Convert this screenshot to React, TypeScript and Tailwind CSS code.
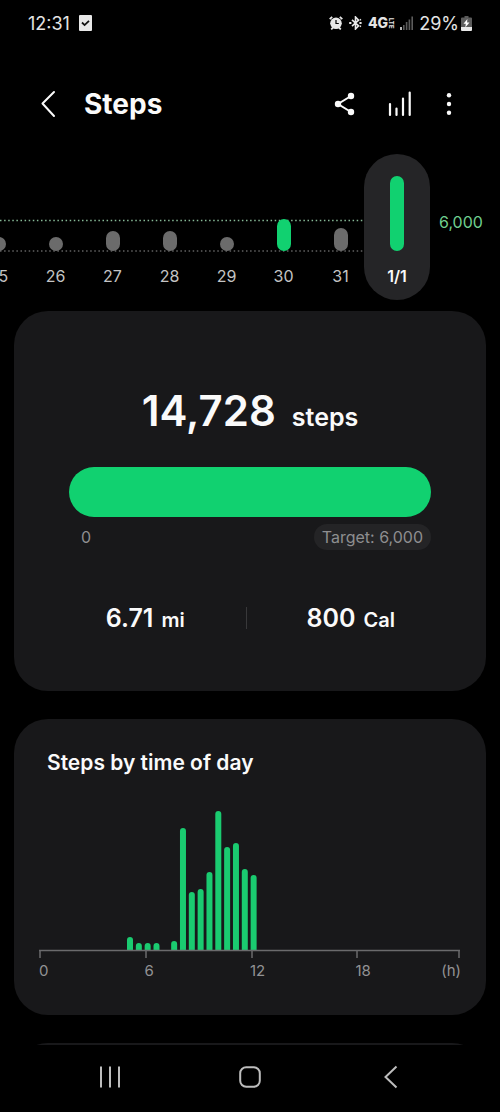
import clsx from "clsx";

const days = [
  { label: "25", height: 14 },
  { label: "26", height: 14 },
  { label: "27", height: 20 },
  { label: "28", height: 20 },
  { label: "29", height: 14 },
  { label: "30", height: 32, reached: true },
  { label: "31", height: 23 },
  { label: "1/1", height: 75, reached: true, selected: true },
];

// one slot per half hour, value is the bar height
const slots = [
  { slot: 10, value: 13 },
  { slot: 11, value: 7 },
  { slot: 12, value: 7 },
  { slot: 13, value: 7 },
  { slot: 15, value: 9 },
  { slot: 16, value: 122 },
  { slot: 17, value: 58 },
  { slot: 18, value: 61 },
  { slot: 19, value: 78 },
  { slot: 20, value: 139 },
  { slot: 21, value: 103 },
  { slot: 22, value: 107 },
  { slot: 23, value: 81 },
  { slot: 24, value: 75 },
];

const ticks = [1, 107, 213, 318, 420];

function StatusBar() {
  return (
    <div className="flex h-[46px] items-center justify-between px-7 text-[18px] text-[#e4e4e4]">
      <div className="flex items-center gap-[9px]">
        <span>12:31</span>
        <svg viewBox="0 0 13 16" className="h-4 w-[13px]">
          <rect width="13" height="16" rx="1" fill="#e8e8e8" />
          <path d="M3 7.5l2.6 2.6L10 5.8" fill="none" stroke="#111" strokeWidth="1.8" />
        </svg>
      </div>
      <div className="flex items-center gap-[6px]">
        <svg viewBox="0 0 14 14" className="size-[14px]">
          <circle cx="7" cy="7.3" r="5.8" fill="#e8e8e8" />
          <path d="M7 4v3.5h2.8" fill="none" stroke="#000" strokeWidth="1.2" />
          <path d="M.7 3.2L3.2.9M13.3 3.2L10.8.9M2.2 13.4l1.6-1.6M11.8 13.4l-1.6-1.6" stroke="#e8e8e8" strokeWidth="1.8" />
        </svg>
        <svg viewBox="0 0 13 14" className="h-[14px] w-[13px]" fill="none" stroke="#e8e8e8" strokeWidth="1.6">
          <path d="M3 3.8l6.6 6L6.5 13V1l3.1 3.2L3 10.2" />
          <path d="M.2 7h2.2M10.4 7h2.2" strokeWidth="2.2" />
          <path d="M11 3l.9 1.4M11 11l.9-1.4" strokeWidth="1.2" />
        </svg>
        <div className="flex items-center text-[14px] leading-4 font-extrabold">
          4G
          <span className="text-[6px] leading-[6px] [writing-mode:vertical-rl]">LTE</span>
        </div>
        <svg viewBox="0 0 13 14" className="h-[14px] w-[13px]">
          <path d="M1 14v-3" stroke="#e8e8e8" strokeWidth="1.6" />
          <path d="M3.8 14V9M6.6 14V6M9.4 14V3.5M12.2 14V.5" stroke="#5c5c5c" strokeWidth="1.6" />
        </svg>
        <div className="flex items-center gap-[2px]">
          <span>29%</span>
          <svg viewBox="0 0 11 15" className="h-[15px] w-[11px]">
            <path d="M3.5 0h4v1.5H10a1 1 0 011 1V11H0V2.500a1 1 0 011-1h2.500z" fill="#5c5c5c" />
            <path d="M0 11h11v3a1 1 0 01-1 1H1a1 1 0 01-1-1z" fill="#e8e8e8" />
            <path d="M6.400 3L2.500 7.800h2.300L4.300 11.500l4.200-4.900H6.100z" fill="#fff" />
          </svg>
        </div>
      </div>
    </div>
  );
}

function Header() {
  return (
    <header className="flex h-[108px] items-center pt-2 pr-[45px] pl-8">
      <button aria-label="Back" className="flex size-8 items-center justify-center">
        <svg viewBox="0 0 16 28" className="h-7 w-4" fill="none" stroke="#fafafa" strokeWidth="2" strokeLinecap="round" strokeLinejoin="round">
          <path d="M14 2L2.500 13.500 14 26" />
        </svg>
      </button>
      <h1 className="ml-5 flex-1 text-[28px] leading-8 font-bold text-[#fafafa]">Steps</h1>
      <div className="flex items-center gap-7">
        <button aria-label="Share">
          <svg viewBox="0 0 24 24" className="size-6">
            <path d="M18 4L5 12l13 8" fill="none" stroke="#fafafa" strokeWidth="2" />
            <circle cx="18" cy="4" r="3.200" fill="#fafafa" />
            <circle cx="5" cy="12" r="3.200" fill="#fafafa" />
            <circle cx="18" cy="20" r="3.200" fill="#fafafa" />
          </svg>
        </button>
        <button aria-label="Trends">
          <svg viewBox="0 0 30 26" className="h-[26px] w-[30px]" stroke="#fafafa" strokeWidth="2.200" strokeLinecap="round">
            <path d="M5 24V13M11.500 24v-6.500M18 24V7.500M24.700 24V1.500" />
          </svg>
        </button>
        <button aria-label="More options">
          <svg viewBox="0 0 12 24" className="h-6 w-3" fill="#fafafa">
            <circle cx="6" cy="3.300" r="2.200" />
            <circle cx="6" cy="12" r="2.200" />
            <circle cx="6" cy="20.700" r="2.200" />
          </svg>
        </button>
      </div>
    </header>
  );
}

function WeekStrip() {
  return (
    <div className="relative flex h-[146px] justify-end overflow-hidden pr-[70px]">
      {/* goal line and base line, ending behind the selected day */}
      <svg className="absolute top-0 left-0 h-full w-[calc(100%-100px)]" fill="none" strokeDasharray="1.5 2.6" strokeWidth="1.3">
        <path d="M0 66.500H2000" stroke="#86b896" />
        <path d="M0 97H2000" stroke="#626262" />
      </svg>
      <span className="absolute top-14 right-0 w-[70px] pl-[9px] text-[16px] leading-6 text-[#6fcf8f]">6,000</span>
      {days.map((day) => (
        <button
          key={day.label}
          className={clsx(
            "relative flex shrink-0 flex-col items-center justify-end gap-[13px] pb-3 text-[16px] leading-6",
            day.selected ? "-ml-[5px] w-[66px] rounded-full bg-[#252527] font-semibold text-[#fafafa]" : "w-[57px] text-[#c4c4c4]"
          )}
        >
          <span
            className={clsx("w-[14px] rounded-full", day.reached ? "bg-[#11d170]" : "bg-[#6b6b6b]")}
            style={{ height: day.height }}
          />
          {day.label}
        </button>
      ))}
    </div>
  );
}

function SummaryCard() {
  return (
    <section className="mt-[11px] rounded-[34px] bg-[#18181a] px-[55px] pt-[72px] pb-[55px]">
      <p className="flex items-baseline justify-center gap-4 text-[42px] leading-[56px] font-semibold text-[#fafafa]">
        14,728 <span className="text-[25px] leading-none">steps</span>
      </p>
      <div className="mt-7 h-[50px] rounded-full bg-[#11d170]" />
      <div className="mt-[7px] flex items-center justify-between text-[16px] leading-[26px] text-[#8e8e90]">
        <span className="pl-3">0</span>
        <span className="rounded-full bg-[#242426] px-2">Target: 6,000</span>
      </div>
      <div className="mt-[50px] flex items-center pr-1 text-[25px] leading-9 font-semibold text-[#fafafa]">
        <p className="flex flex-1 items-baseline justify-center gap-2 pr-6">
          6.71 <span className="text-[20px] leading-none">mi</span>
        </p>
        <div className="h-[22px] w-px bg-[#38383a]" />
        <p className="flex flex-1 items-baseline justify-center gap-2 pl-7">
          800 <span className="text-[20px] leading-none">Cal</span>
        </p>
      </div>
    </section>
  );
}

function TimeOfDayCard() {
  return (
    <section className="mt-7 rounded-[34px] bg-[#18181a] px-[25px] pt-7 pb-8">
      <h2 className="pl-2 text-[21px] leading-8 font-semibold text-[#fafafa]">Steps by time of day</h2>
      <svg viewBox="0 0 422 148" className="mt-[31px] h-auto w-full">
        {slots.map(({ slot, value }) => {
          const x = 88 + (slot - 10) * 8.83;
          const top = 140 - value;
          return <path key={slot} d={`M${x} 140V${top + 3}a3 3 0 016 0V140z`} fill="#1acb70" />;
        })}
        <path d="M0 140.500H421" stroke="#6a6a6c" strokeWidth="1.500" />
        {ticks.map((x) => (
          <path key={x} d={`M${x} 140v8`} stroke="#6a6a6c" strokeWidth="1.500" />
        ))}
      </svg>
      <div className="mt-px grid grid-cols-4 text-[15px] leading-6 text-[#929294]">
        <span>0</span>
        <span>6</span>
        <span>12</span>
        <span className="flex justify-between">
          <span>18</span>
          <span>(h)</span>
        </span>
      </div>
    </section>
  );
}

function NavBar() {
  return (
    <nav className="flex h-16 items-center justify-between px-[90px] text-[#bdbdbd]">
      <button aria-label="Recent apps" className="flex size-10 items-center justify-center">
        <svg viewBox="0 0 24 24" className="size-6" stroke="currentColor" strokeWidth="2">
          <path d="M3 1.500v21M12 1.500v21M21 1.500v21" />
        </svg>
      </button>
      <button aria-label="Home" className="flex size-10 items-center justify-center">
        <svg viewBox="0 0 24 24" className="size-6" fill="none" stroke="currentColor" strokeWidth="2">
          <rect x="2.200" y="2.200" width="19.600" height="19.600" rx="6" />
        </svg>
      </button>
      <button aria-label="Back" className="flex size-10 items-center justify-center">
        <svg viewBox="0 0 24 24" className="size-6" fill="none" stroke="currentColor" strokeWidth="2">
          <path d="M18.500 1.500L7.500 12l11 10.500" />
        </svg>
      </button>
    </nav>
  );
}

export default function App() {
  return (
    <div className="min-h-screen overflow-hidden bg-black font-['Inter',sans-serif]">
      <StatusBar />
      <Header />
      <WeekStrip />
      <main className="px-[14px]">
        <SummaryCard />
        <TimeOfDayCard />
        <div className="mt-7 h-[2px] overflow-hidden">
          <div className="h-20 rounded-[34px] bg-[#18181a]" />
        </div>
      </main>
      <NavBar />
    </div>
  );
}
